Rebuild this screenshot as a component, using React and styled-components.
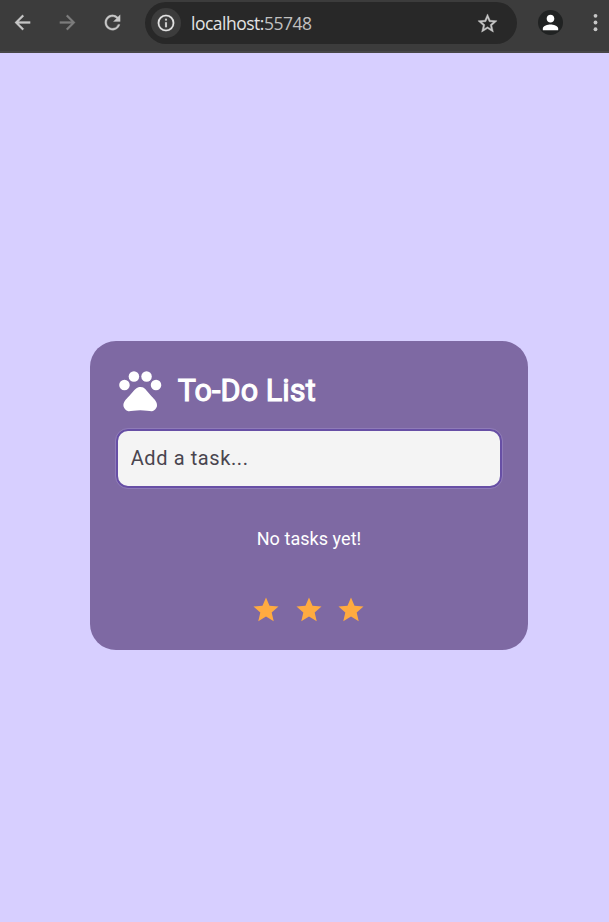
import React from 'react';
import styled, { createGlobalStyle } from 'styled-components';

const GlobalStyle = createGlobalStyle`
  * { box-sizing: border-box; }
  body { margin: 0; background: #d7cfff; }
`;

const Page = styled.div`
  display: flex;
  flex-direction: column;
  height: 922px;
  overflow: hidden;
  background: #d7cfff;
  font-family: Roboto, sans-serif;
`;

const Toolbar = styled.header`
  display: flex;
  flex: none;
  height: 53px;
  padding: 2px 0 0 11px;
  background: #3c3c3c;
  border-bottom: 2px solid #474747;
`;

const NavButton = styled.button`
  display: flex;
  align-items: center;
  width: 45px;
  height: 42px;
  padding: 0 0 1px;
  border: 0;
  background: none;
  color: ${({ $muted }) => ($muted ? '#7d7d7d' : '#c7c7c7')};
  stroke: currentColor;
  stroke-width: 0.3px;
`;

const AddressBar = styled.div`
  display: flex;
  align-items: center;
  width: 372px;
  height: 42px;
  margin-left: -1px;
  padding: 0 18px 0 6px;
  border-radius: 21px;
  background: #282828;
`;

const SiteInfo = styled.span`
  display: flex;
  align-items: center;
  justify-content: center;
  width: 30px;
  height: 30px;
  border-radius: 50%;
  background: #3c3c3c;
  color: #e3e3e3;
`;

const Address = styled.span`
  flex: 1;
  margin-left: 10px;
  font: 400 17.5px/24px "Open Sans", sans-serif;
  letter-spacing: -0.5px;
  color: #e3e3e3;
`;

const Port = styled.span`
  color: #c0c0c0;
`;

const Avatar = styled.span`
  display: flex;
  align-items: center;
  justify-content: center;
  width: 25px;
  height: 25px;
  margin: 8px 0 0 21px;
  border-radius: 50%;
  background: #202222;
  color: #fff;
`;

const MenuButton = styled(NavButton)`
  width: 24px;
  margin-left: 21px;
  stroke: none;
`;

const Icon = styled.svg`
  display: block;
  flex: none;
  width: ${({ $size }) => $size}px;
  height: ${({ $size }) => $size}px;
  fill: currentColor;
`;

const Main = styled.main`
  display: flex;
  flex: 1;
  align-items: center;
  justify-content: center;
  padding: 16px 0 0 9px;
`;

const Card = styled.section`
  width: 438px;
  height: 309px;
  padding: 24px 26px 0;
  border-radius: 26px;
  background: #7e69a3;
  color: #fff;
`;

const CardHeader = styled.div`
  display: flex;
  align-items: center;
  height: 51px;
  margin-left: -1px;
`;

const PawIcon = styled(Icon)`
  width: 50.5px;
  height: 50.5px;
`;

const Title = styled.h1`
  margin: 0 0 0 12.2px;
  font-size: 30.5px;
  font-weight: 400;
  line-height: 40px;
  letter-spacing: 0.1px;
  -webkit-text-stroke: 1.1px currentColor;
`;

const TaskInput = styled.input`
  display: block;
  width: 386px;
  height: 59px;
  margin-top: 13px;
  padding: 0 12.7px 2px;
  border: 2px solid #674fa5;
  border-radius: 12px;
  outline: 1px solid #8f7bb8;
  outline-offset: -0.5px;
  background: #f4f4f4;
  font: 400 20px Roboto, sans-serif;
  letter-spacing: 0.6px;

  &::placeholder {
    color: #49454f;
    opacity: 1;
  }
`;

const EmptyMessage = styled.p`
  margin: 39px 0 0;
  font-size: 18px;
  font-weight: 400;
  line-height: 24px;
  letter-spacing: 0.05px;
  text-align: center;
`;

const Rating = styled.div`
  display: flex;
  justify-content: center;
  gap: 12.5px;
  margin: 44px 0.4px 0 0;
  color: #ffab40;
`;

function Glyph({ size, children }) {
  return <Icon $size={size} viewBox="0 0 24 24" aria-hidden="true">{children}</Icon>;
}

const STAR = 'M12 17.27 18.18 21l-1.64-7.03L22 9.24l-7.19-.61L12 2 9.19 8.63 2 9.24l5.46 4.73L5.82 21z';

export default function App() {
  return (
    <Page>
      <GlobalStyle />
      <Toolbar>
        <NavButton aria-label="Back">
          <Glyph size={23}><path d="M20 11H7.83l5.59-5.59L12 4l-8 8 8 8 1.41-1.41L7.83 13H20v-2z" /></Glyph>
        </NavButton>
        <NavButton $muted aria-label="Forward">
          <Glyph size={23}><path d="m12 4-1.41 1.41L16.17 11H4v2h12.17l-5.58 5.59L12 20l8-8z" /></Glyph>
        </NavButton>
        <NavButton aria-label="Reload">
          <Glyph size={23}><path d="M17.65 6.35A7.958 7.958 0 0 0 12 4c-4.42 0-7.99 3.58-7.99 8s3.57 8 7.99 8c3.73 0 6.84-2.55 7.73-6h-2.08A5.99 5.99 0 0 1 12 18c-3.31 0-6-2.69-6-6s2.69-6 6-6c1.66 0 3.14.69 4.22 1.78L13 11h7V4z" /></Glyph>
        </NavButton>
        <AddressBar>
          <SiteInfo>
            <Glyph size={20}><path stroke="currentColor" strokeWidth=".2" d="M11 7h2v2h-2zm0 4h2v6h-2zm1-9a10 10 0 1 0 0 20 10 10 0 0 0 0-20m0 18a8 8 0 1 1 0-16 8 8 0 0 1 0 16" /></Glyph>
          </SiteInfo>
          <Address>localhost:<Port>55748</Port></Address>
          <Glyph size={23}><path fill="#c7c7c7" stroke="#c7c7c7" strokeWidth=".4" d="m22 9.24-7.19-.62L12 2 9.19 8.63 2 9.24l5.46 4.73L5.82 21 12 17.27 18.18 21l-1.63-7.03zM12 15.4l-3.76 2.27 1-4.28-3.32-2.88 4.38-.38L12 6.1l1.71 4.04 4.38.38-3.32 2.88 1 4.28z" /></Glyph>
        </AddressBar>
        <Avatar>
          <Glyph size={23}><path d="M12 12c2.21 0 4-1.79 4-4s-1.79-4-4-4-4 1.79-4 4 1.79 4 4 4m0 2c-2.67 0-8 1.34-8 4v2h16v-2c0-2.66-5.33-4-8-4" /></Glyph>
        </Avatar>
        <MenuButton aria-label="Menu">
          <Glyph size={23}><circle cx="12" cy="5" r="2" /><circle cx="12" cy="12" r="2" /><circle cx="12" cy="19" r="2" /></Glyph>
        </MenuButton>
      </Toolbar>
      <Main>
        <Card>
          <CardHeader>
            <PawIcon viewBox="0 0 24 24" aria-hidden="true">
              <circle cx="4.5" cy="9.5" r="2.5" /><circle cx="9" cy="5.5" r="2.5" /><circle cx="15" cy="5.5" r="2.5" /><circle cx="19.5" cy="9.5" r="2.5" />
              <path d="M17.34 14.86c-.87-1.02-1.6-1.89-2.48-2.91-.46-.54-1.05-1.08-1.75-1.32-.11-.04-.22-.07-.33-.09-.25-.04-.52-.04-.78-.04s-.53 0-.79.05c-.11.02-.22.05-.33.09-.7.24-1.28.78-1.75 1.32-.87 1.02-1.6 1.89-2.48 2.91-1.31 1.31-2.92 2.76-2.62 4.79.29 1.02 1.02 2.03 2.33 2.32.73.15 3.06-.44 5.54-.44h.18c2.48 0 4.81.58 5.54.44 1.31-.29 2.04-1.31 2.33-2.32.31-2.04-1.3-3.49-2.61-4.8z" />
            </PawIcon>
            <Title>To-Do List</Title>
          </CardHeader>
          <TaskInput placeholder="Add a task..." aria-label="Add a task" />
          <EmptyMessage>No tasks yet!</EmptyMessage>
          <Rating>
            {[1, 2, 3].map((n) => (
              <Glyph key={n} size={30}><path d={STAR} /></Glyph>
            ))}
          </Rating>
        </Card>
      </Main>
    </Page>
  );
}
